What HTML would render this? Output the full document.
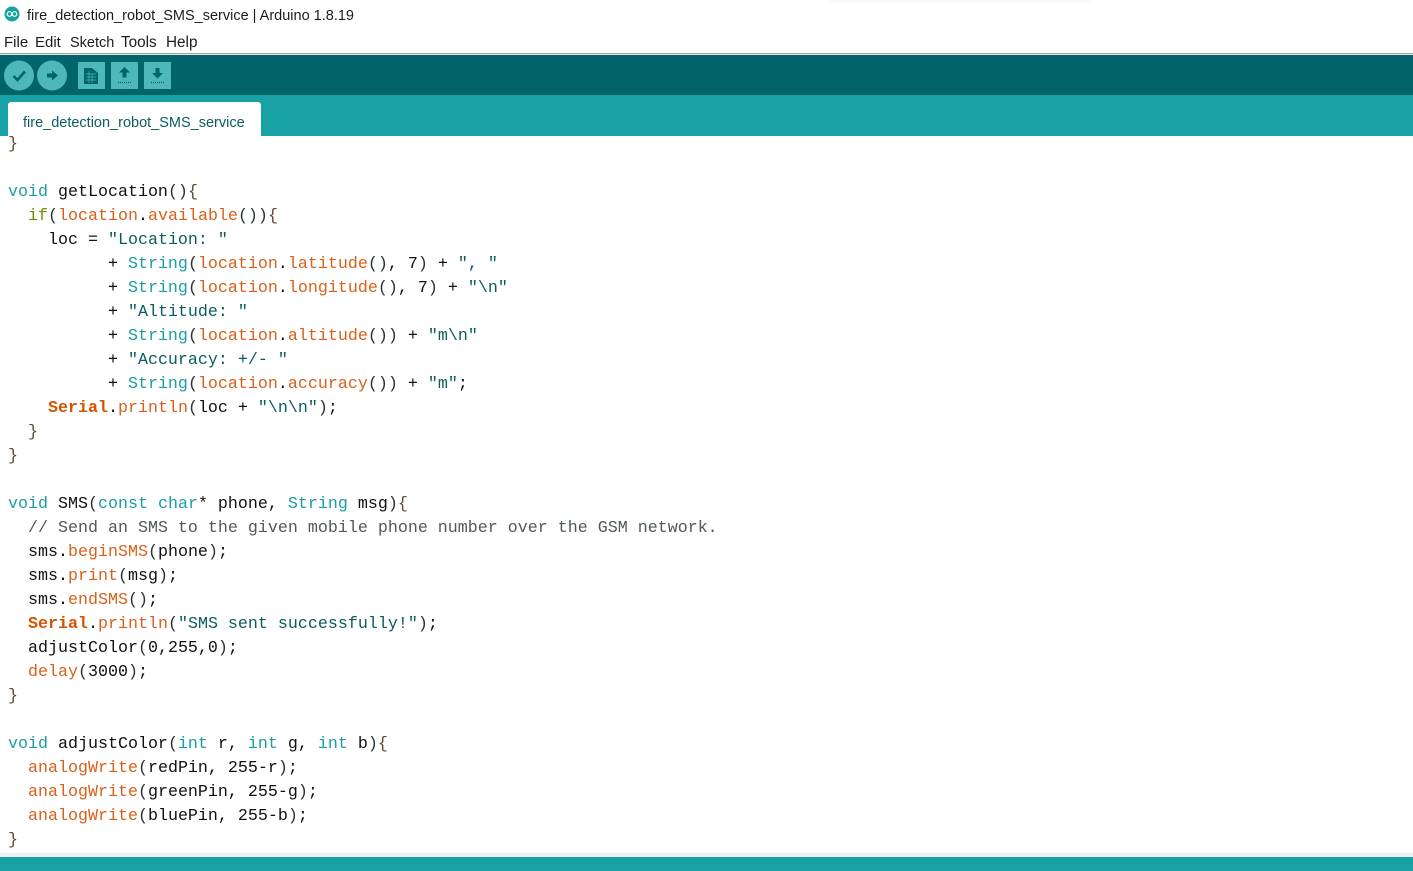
<!DOCTYPE html>
<html>
<head>
<meta charset="utf-8">
<style>
html,body{margin:0;padding:0;background:#fff;}
#p{position:relative;width:1413px;height:871px;overflow:hidden;background:#fff;font-family:"Liberation Sans",sans-serif;}
.a{position:absolute;}
#title{left:27px;top:7px;font-size:14.5px;line-height:18px;color:#1c1c1c;white-space:pre;}
.m{position:absolute;top:34px;font-size:15px;line-height:18px;color:#1c1c1c;white-space:pre;}
#code{position:absolute;left:8px;top:133px;margin:0;font-family:"Liberation Mono",monospace;font-size:16.67px;line-height:24px;color:#111;white-space:pre;}
.k{color:#1a9ea2}.f{color:#d9601a}.s{color:#0b5c60}.b{color:#d35400;font-weight:bold}.c{color:#50595d}.o{color:#728e00}.p{color:#2a3236}
.q{color:#5a4a30}
</style>
</head>
<body>
<div id="p">
<div class="a" style="left:830px;top:-6px;width:260px;height:6px;box-shadow:0 0 7px rgba(0,0,0,.07);"></div>
<svg class="a" style="left:4px;top:6px" width="16" height="16" viewBox="0 0 16 16"><circle cx="8" cy="8" r="7.5" fill="#17a1a5"/><circle cx="5.5" cy="8" r="2.3" fill="none" stroke="#fff" stroke-width="1.2"/><circle cx="10.5" cy="8" r="2.3" fill="none" stroke="#fff" stroke-width="1.2"/></svg>
<div id="title" class="a">fire_detection_robot_SMS_service | Arduino 1.8.19</div>
<div class="m" style="left:4px">File</div>
<div class="m" style="left:35px">Edit</div>
<div class="m" style="left:70px;font-size:14.5px">Sketch</div>
<div class="m" style="left:121px;font-size:15.3px">Tools</div>
<div class="m" style="left:166px;font-size:15.3px">Help</div>
<div class="a" style="left:0;top:53px;width:1413px;height:1px;background:#a0a0a0"></div>
<div class="a" style="left:0;top:54px;width:1413px;height:1px;background:#e8e8e8"></div>
<div class="a" style="left:0;top:55px;width:1413px;height:40px;background:#006468"></div>
<div class="a" style="left:0;top:95px;width:1413px;height:41px;background:#17a1a5"></div>
<svg class="a" style="left:0;top:55px" width="180" height="40" viewBox="0 0 180 40">
<circle cx="19" cy="20.500" r="15" fill="#4db7bb"/>
<path d="M13.500 21l4 4 7.500-8.500" fill="none" stroke="#006468" stroke-width="2.600"/>
<circle cx="52" cy="20.500" r="15" fill="#4db7bb"/>
<path d="M47 18.500h5v-3l6 5-6 5v-3h-5z" fill="#006468"/>
<rect x="78" y="7" width="27" height="27" fill="#4db7bb"/>
<path d="M84 13h8l6 5v11H84z" fill="#006468"/>
<path d="M86 19h10M86 22h10M86 25h10M89 16v12M92 19v9" stroke="#4db7bb" stroke-width=".7" fill="none"/>
<rect x="111" y="7" width="27" height="27" fill="#4db7bb"/>
<path d="M124.500 12l5.500 5.500h-3.500v5h-4v-5H119z" fill="#006468"/>
<path d="M118 27.500h13" stroke="#006468" stroke-width="1.200" stroke-dasharray="1 1"/>
<rect x="144" y="7" width="27" height="27" fill="#4db7bb"/>
<path d="M155.500 13h4v5h3.500l-5.500 5.500-5.500-5.500h3.500z" fill="#006468"/>
<path d="M151 27.500h13" stroke="#006468" stroke-width="1.200" stroke-dasharray="1 1"/>
</svg>
<div class="a" style="left:8px;top:102px;width:253px;height:34px;background:#fff;border-radius:3px 3px 0 0"></div>
<div class="a" style="left:23px;top:114px;font-size:14.5px;line-height:18px;color:#0b5c60;white-space:pre">fire_detection_robot_SMS_service</div>
<pre id="code"><span class="q">}</span>

<span class="k">void</span> getLocation<span class="p">()</span><span class="q">{</span>
  <span class="o">if</span><span class="p">(</span><span class="f">location</span>.<span class="f">available</span><span class="p">())</span><span class="q">{</span>
    loc = <span class="s">"Location: "</span>
          + <span class="k">String</span><span class="p">(</span><span class="f">location</span>.<span class="f">latitude</span><span class="p">()</span>, 7<span class="p">)</span> + <span class="s">", "</span>
          + <span class="k">String</span><span class="p">(</span><span class="f">location</span>.<span class="f">longitude</span><span class="p">()</span>, 7<span class="p">)</span> + <span class="s">"\n"</span>
          + <span class="s">"Altitude: "</span>
          + <span class="k">String</span><span class="p">(</span><span class="f">location</span>.<span class="f">altitude</span><span class="p">())</span> + <span class="s">"m\n"</span>
          + <span class="s">"Accuracy: +/- "</span>
          + <span class="k">String</span><span class="p">(</span><span class="f">location</span>.<span class="f">accuracy</span><span class="p">())</span> + <span class="s">"m"</span>;
    <span class="b">Serial</span>.<span class="f">println</span><span class="p">(</span>loc + <span class="s">"\n\n"</span><span class="p">)</span>;
  <span class="q">}</span>
<span class="q">}</span>

<span class="k">void</span> SMS<span class="p">(</span><span class="k">const</span> <span class="k">char</span>* phone, <span class="k">String</span> msg<span class="p">)</span><span class="q">{</span>
  <span class="c">// Send an SMS to the given mobile phone number over the GSM network.</span>
  sms.<span class="f">beginSMS</span><span class="p">(</span>phone<span class="p">)</span>;
  sms.<span class="f">print</span><span class="p">(</span>msg<span class="p">)</span>;
  sms.<span class="f">endSMS</span><span class="p">()</span>;
  <span class="b">Serial</span>.<span class="f">println</span><span class="p">(</span><span class="s">"SMS sent successfully!"</span><span class="p">)</span>;
  adjustColor<span class="p">(</span>0,255,0<span class="p">)</span>;
  <span class="f">delay</span><span class="p">(</span>3000<span class="p">)</span>;
<span class="q">}</span>

<span class="k">void</span> adjustColor<span class="p">(</span><span class="k">int</span> r, <span class="k">int</span> g, <span class="k">int</span> b<span class="p">)</span><span class="q">{</span>
  <span class="f">analogWrite</span><span class="p">(</span>redPin, 255-r<span class="p">)</span>;
  <span class="f">analogWrite</span><span class="p">(</span>greenPin, 255-g<span class="p">)</span>;
  <span class="f">analogWrite</span><span class="p">(</span>bluePin, 255-b<span class="p">)</span>;
<span class="q">}</span></pre>
<div class="a" style="left:0;top:853px;width:1413px;height:4px;background:#f0f0f0"></div>
<div class="a" style="left:0;top:857px;width:1413px;height:14px;background:#17a1a5"></div>
</div>
</body>
</html>
